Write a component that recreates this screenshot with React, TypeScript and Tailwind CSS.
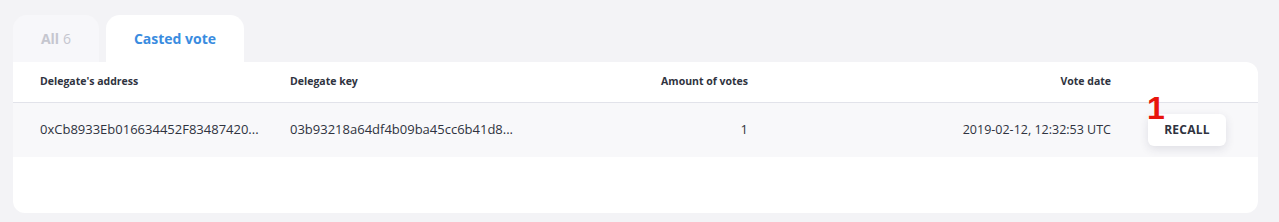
const rows = [
  {
    address: "0xCb8933Eb016634452F83487420...",
    key: "03b93218a64df4b09ba45cc6b41d8...",
    votes: "1",
    date: "2019-02-12, 12:32:53 UTC",
  },
];

export default function App() {
  return (
    <div
      className="w-[1279px] h-[222px] bg-[#f3f3f6] pt-[15px] pl-[13px] pr-[21px] text-[#2f3340]"
      style={{ fontFamily: '"Open Sans", "Noto Sans", sans-serif' }}
    >
      {/* tabs */}
      <div className="flex items-end gap-[7px] h-[47px]">
        <div className="w-[86px] h-[47px] rounded-t-[14px] bg-[#f7f7fa] flex items-center justify-center gap-[4px] text-[14px] text-[#c5c6cf]">
          <span className="font-bold">All</span>
          <span>6</span>
        </div>
        <div className="w-[138px] h-[47px] rounded-t-[14px] bg-white flex items-center justify-center text-[14px] font-bold text-[#3a8ce0]">
          Casted vote
        </div>
      </div>

      {/* table card */}
      <div className="h-[151px] bg-white rounded-b-[12px] rounded-tr-[12px]">
        <div className="flex items-center h-[41px] border-b border-[#e2e3ea] text-[10.5px] font-bold text-[#2f3340]">
          <div className="w-[277px] pl-[27px]">Delegate's address</div>
          <div className="w-[275px]">Delegate key</div>
          <div className="w-[183px] text-right">Amount of votes</div>
          <div className="w-[363px] text-right">Vote date</div>
        </div>
        {rows.map((r) => (
          <div key={r.key} className="flex items-center h-[54px] bg-[#f8f8fa] text-[13px] text-[#2f3340]">
            <div className="w-[277px] pl-[27px] whitespace-nowrap">{r.address}</div>
            <div className="w-[275px] whitespace-nowrap">{r.key}</div>
            <div className="w-[183px] text-right">{r.votes}</div>
            <div className="w-[363px] text-right text-[12.5px]">{r.date}</div>
            <div className="relative ml-[37px]">
              <button className="w-[78px] h-[32px] bg-white rounded-[6px] shadow-[0_3px_10px_rgba(40,45,70,0.12)] text-[12px] font-bold tracking-[0.02em] text-[#2f3340]">
                RECALL
              </button>
              <span
                className="absolute left-[-1px] top-[-22px] text-[32px] font-bold leading-none text-[#e8140c]"
                style={{ fontFamily: '"Liberation Sans", Arial, sans-serif' }}
              >
                1
              </span>
            </div>
          </div>
        ))}
      </div>
    </div>
  );
}
